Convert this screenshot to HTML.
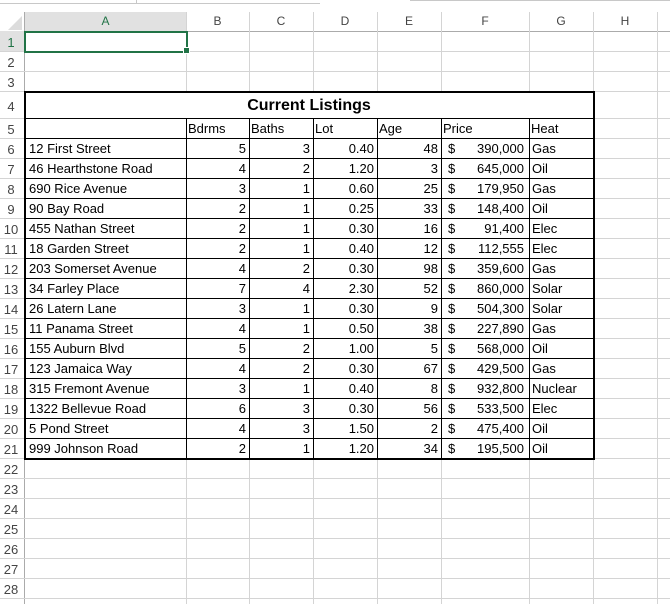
<!DOCTYPE html>
<html><head><meta charset="utf-8"><style>
body{margin:0;width:670px;height:604px;background:#fff;position:relative;overflow:hidden;font-family:"Liberation Sans",sans-serif}
.a{position:absolute}
.vl{position:absolute;width:1px;background:#d4d4d4}
.hl{position:absolute;height:1px;background:#d4d4d4}
.ch{position:absolute;top:12px;height:19px;text-align:center;line-height:19px;font-size:12px;color:#444}
.rh{position:absolute;left:0;width:22px;text-align:center;font-size:13px;color:#444;line-height:20px}
.c{position:absolute;font-size:13px;line-height:20px;color:#000;white-space:nowrap;height:20px}
.r{text-align:right}
.bv{position:absolute;width:1px;background:#000}
.bh{position:absolute;height:1px;background:#000}
</style></head><body>
<div class="a" style="left:0;top:0;width:320px;height:3px;border-bottom:1px solid #c8c8c8"></div>
<div class="a" style="left:136px;top:0;width:1px;height:3px;background:#c8c8c8"></div>
<div class="a" style="left:410px;top:0;width:260px;height:1px;background:#c8c8c8"></div>
<div class="a" style="left:0;top:12px;width:670px;height:19px;background:#fff;border-bottom:1px solid #ababab"></div>
<div class="a" style="left:25px;top:12px;width:161px;height:19px;background:#e1e1e1;border-bottom:2px solid #217346"></div>
<div class="a" style="left:0;top:31px;width:24px;height:20px;background:#e1e1e1"></div>
<div class="a" style="left:24px;top:12px;width:1px;height:592px;background:#ababab"></div>
<svg class="a" style="left:8px;top:16px" width="14" height="14"><polygon points="14,0 14,14 0,14" fill="#dcdcdc"/></svg>
<div id="g"></div>
<script>
var xs=[25,186,249,313,377,441,529,593,657];
var L="ABCDEFGH",h="";
for(var i=0;i<8;i++){h+='<div class="ch" style="left:'+xs[i]+'px;width:'+(xs[i+1]-xs[i])+'px;'+(i==0?'color:#217346':'')+'">'+L[i]+'</div>';}
for(var i=1;i<9;i++){h+='<div class="vl" style="left:'+xs[i]+'px;top:12px;height:592px"></div>';}
var ys=[31,51,71,91,118];for(var k=6;k<=29;k++)ys.push(118+(k-5)*20);
for(var r=1;r<=28;r++){var y=ys[r-1],hh=ys[r]-y;
h+='<div class="hl" style="left:0;top:'+(ys[r])+'px;width:670px"></div>';
h+='<div class="rh" style="top:'+(y+(hh-20)/2+2)+'px;'+(r==1?'color:#217346':'')+'">'+r+'</div>';}
var d=[["12 First Street",5,3,"0.40",48,"390,000","Gas"],["46 Hearthstone Road",4,2,"1.20",3,"645,000","Oil"],["690 Rice Avenue",3,1,"0.60",25,"179,950","Gas"],["90 Bay Road",2,1,"0.25",33,"148,400","Oil"],["455 Nathan Street",2,1,"0.30",16,"91,400","Elec"],["18 Garden Street",2,1,"0.40",12,"112,555","Elec"],["203 Somerset Avenue",4,2,"0.30",98,"359,600","Gas"],["34 Farley Place",7,4,"2.30",52,"860,000","Solar"],["26 Latern Lane",3,1,"0.30",9,"504,300","Solar"],["11 Panama Street",4,1,"0.50",38,"227,890","Gas"],["155 Auburn Blvd",5,2,"1.00",5,"568,000","Oil"],["123 Jamaica Way",4,2,"0.30",67,"429,500","Gas"],["315 Fremont Avenue",3,1,"0.40",8,"932,800","Nuclear"],["1322 Bellevue Road",6,3,"0.30",56,"533,500","Elec"],["5 Pond Street",4,3,"1.50",2,"475,400","Oil"],["999 Johnson Road",2,1,"1.20",34,"195,500","Oil"]];
h+='<div class="a" style="left:25px;top:91px;width:568px;height:367px;background:#fff"></div>';
h+='<div class="c" style="left:25px;top:96px;width:568px;text-align:center;font-weight:bold;font-size:16px">Current Listings</div>';
var hd=["","Bdrms","Baths","Lot","Age","Price","Heat"];
for(var j=1;j<7;j++)h+='<div class="c" style="left:'+(xs[j]+2)+'px;top:119px">'+hd[j]+'</div>';
for(var i=0;i<d.length;i++){var y=139+i*20,row=d[i];
h+='<div class="c" style="left:29px;top:'+y+'px">'+row[0]+'</div>';
for(var j=1;j<5;j++)h+='<div class="c r" style="left:'+xs[j]+'px;width:'+(xs[j+1]-xs[j]-3)+'px;top:'+y+'px">'+row[j]+'</div>';
h+='<div class="c" style="left:448px;top:'+y+'px">$</div>';
h+='<div class="c r" style="left:441px;width:83px;top:'+y+'px">'+row[5]+'</div>';
h+='<div class="c" style="left:532px;top:'+y+'px">'+row[6]+'</div>';}
for(var y=118;y<=438;y+=20)h+='<div class="bh" style="left:25px;top:'+y+'px;width:568px"></div>';
for(var j=1;j<7;j++)h+='<div class="bv" style="left:'+xs[j]+'px;top:118px;height:340px"></div>';
h+='<div class="a" style="left:24px;top:91px;width:567px;height:365px;border:2px solid #000"></div>';
h+='<div class="a" style="left:24px;top:31px;width:160px;height:18px;border:2px solid #217346"></div>';
h+='<div class="a" style="left:183px;top:47px;width:5px;height:5px;background:#217346;border:1px solid #fff"></div>';
document.getElementById('g').innerHTML=h;
</script>
</body></html>
